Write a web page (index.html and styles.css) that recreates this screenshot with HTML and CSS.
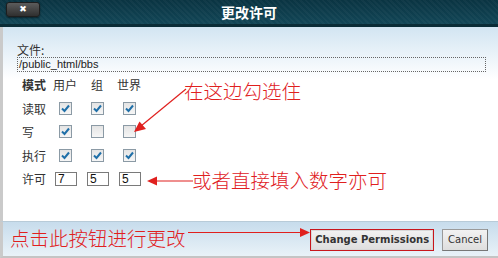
FILE: index.html
```html
<!DOCTYPE html>
<html lang="zh-CN">
<head>
    <meta charset="UTF-8">
    <title>更改许可</title>
    <link rel="stylesheet" href="styles.css">
</head>
<body>
    <div class="dialog">
        <div class="titlebar">
            <button class="close">&#x2716;</button>
            <h1>更改许可</h1>
        </div>

        <div class="content">
            <div class="file-label">文件:</div>
            <div class="file-path">/public_html/bbs</div>

            <div class="perms">
                <div class="head">模式</div>
                <div class="col">用户</div>
                <div class="col">组</div>
                <div class="col">世界</div>

                <div class="label">读取</div>
                <div class="cell"><span class="check on"></span></div>
                <div class="cell"><span class="check on"></span></div>
                <div class="cell"><span class="check on"></span></div>

                <div class="label">写</div>
                <div class="cell"><span class="check on"></span></div>
                <div class="cell"><span class="check"></span></div>
                <div class="cell"><span class="check"></span></div>

                <div class="label">执行</div>
                <div class="cell"><span class="check on"></span></div>
                <div class="cell"><span class="check on"></span></div>
                <div class="cell"><span class="check on"></span></div>

                <div class="label">许可</div>
                <div class="cell"><input class="num" type="text" value="7"></div>
                <div class="cell"><input class="num" type="text" value="5"></div>
                <div class="cell"><input class="num" type="text" value="5"></div>
            </div>
        </div>

        <div class="footer">
            <span class="note">点击此按钮进行更改</span>
            <div class="buttons">
                <button class="btn primary">Change Permissions</button>
                <button class="btn">Cancel</button>
            </div>
        </div>

        <!-- annotations drawn over the dialog -->
        <span class="tip tip-check">在这边勾选住</span>
        <span class="tip tip-num">或者直接填入数字亦可</span>
        <svg class="arrows" width="498" height="258" viewBox="0 0 498 258">
            <g stroke="#e0201e" stroke-width="1.2" fill="none">
                <line x1="186" y1="89" x2="141" y2="126"/>
                <line x1="193" y1="181" x2="154" y2="181"/>
                <line x1="188" y1="232.5" x2="301" y2="232.5"/>
            </g>
            <g fill="#e0201e">
                <polygon points="134,132 139.5,121.5 146,129"/>
                <polygon points="147,181 157,176.5 157,185.5"/>
                <polygon points="310,232.5 300,228 300,237"/>
            </g>
        </svg>
    </div>

    <script>
        // checkbox ticks
        document.querySelectorAll('.check.on').forEach(el => {
            el.innerHTML = '<svg width="11" height="11" viewBox="0 0 11 11"><path d="M2 5.5 L4.5 8 L9 2.5" stroke="#1f6fa8" stroke-width="2" fill="none"/></svg>';
        });
    </script>
</body>
</html>
```

FILE: styles.css
```css
body {
    margin: 0;
    font-family: "Noto Sans CJK SC", sans-serif;
    font-size: 12px;
    color: #333;
}
.dialog {
    position: relative;
    width: 498px;
    height: 258px;
    display: flex;
    flex-direction: column;
    overflow: hidden;
}
.titlebar {
    height: 24px;
    border-bottom: 3px solid #0a2c37;
    background:
        repeating-linear-gradient(45deg, rgba(255,255,255,0.03) 0 2px, rgba(0,0,0,0) 2px 4px),
        linear-gradient(#0a3442, #124657);
    display: flex;
    align-items: center;
    justify-content: center;
    position: relative;
}
.titlebar h1 {
    margin: 0;
    font-size: 14px;
    font-weight: bold;
    color: #fff;
}
.close {
    position: absolute;
    left: 6px;
    top: 2px;
    width: 34px;
    height: 15px;
    padding: 0;
    border: 1px solid #1e1e1e;
    border-radius: 3px;
    background: linear-gradient(#5c5c5c, #2f2f2f);
    box-shadow: 0 1px 2px rgba(0,0,0,0.5);
    color: #fff;
    font-size: 9px;
    line-height: 13px;
    font-family: "DejaVu Sans", sans-serif;
}
.content {
    flex: 1;
    border-left: 3px solid #cacaca;
    padding: 15px 0 0 14px;
    background: linear-gradient(#d2e5f2, #ffffff 52px);
}
.file-label {
    line-height: 15px;
    color: #333;
}
.file-path {
    width: 466px;
    height: 13px;
    border: 1px dotted #666;
    font-family: "Liberation Sans", Arial, sans-serif;
    font-size: 11px;
    line-height: 13px;
    color: #222;
    padding-left: 1px;
}
.perms {
    display: grid;
    grid-template-columns: 27px 32px 32px 32px;
    grid-template-rows: 24px 24px 23px 24px 23px;
    margin-left: 5px;
    align-items: center;
}
.head {
    font-weight: bold;
}
.col, .cell {
    display: flex;
    justify-content: center;
    align-items: center;
}
.check {
    display: inline-flex;
    align-items: center;
    justify-content: center;
    width: 11px;
    height: 11px;
    border: 1px solid #8b9aa5;
    background: linear-gradient(#e4e4e4, #f6f6f6);
}
.num {
    width: 18px;
    height: 12px;
    padding: 0 0 0 2px;
    margin: 0 0 0 2px;
    border: 1px solid #7a7a7a;
    font-family: "Liberation Sans", Arial, sans-serif;
    font-size: 12px;
    color: #111;
    background: #fff;
}
.footer {
    height: 34px;
    border-left: 3px solid #cacaca;
    border-top: 1px solid #b8cbd8;
    border-bottom: 2px solid #c4c4c4;
    background: linear-gradient(#c7dcec, #e9f2f8);
    display: flex;
    align-items: center;
    justify-content: space-between;
    padding: 0 10px 0 7px;
}
.note {
    color: #e0201e;
    font-size: 19.5px;
    font-weight: 300;
    line-height: 24px;
    margin-top: -2px;
}
.buttons {
    display: flex;
    gap: 8px;
    margin-top: 1px;
}
.btn {
    height: 22px;
    padding: 0 5px;
    border: 1px solid #9a9a9a;
    border-right-color: #777;
    border-bottom-color: #777;
    background: linear-gradient(#f2f2f2, #dedede);
    font-family: "DejaVu Sans", Verdana, sans-serif;
    font-size: 10px;
    color: #333;
}
.btn.primary {
    border: 1px solid #c8161c;
    box-shadow: inset 0 0 0 1px #d8d8d8;
    font-weight: bold;
    padding: 0 4px;
}
.tip {
    position: absolute;
    color: #e0201e;
    font-size: 19.5px;
    font-weight: 300;
    line-height: 24px;
}
.tip-check {
    left: 184px;
    top: 79px;
}
.tip-num {
    left: 192px;
    top: 168px;
}
.arrows {
    position: absolute;
    left: 0;
    top: 0;
    pointer-events: none;
}
```
